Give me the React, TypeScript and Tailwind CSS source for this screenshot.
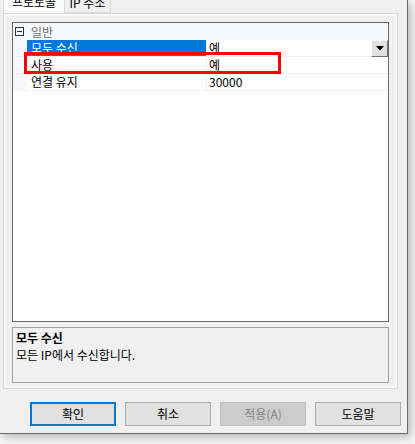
import React from 'react';

const font = { fontFamily: '"Noto Sans CJK KR", "Noto Sans", sans-serif' };

function Row({ label, value, selected, dropdown }: { label: string; value: string; selected?: boolean; dropdown?: boolean }) {
  return (
    <div className="flex h-[17px] border-b border-[#f0f0f0]">
      <div className="w-[14px] shrink-0 bg-[#f4f7fc]" />
      <div
        className={
          selected
            ? 'w-[179px] shrink-0 pl-[4px] text-[12px] leading-[16px] bg-[#0078d7] text-white'
            : 'w-[179px] shrink-0 pl-[4px] text-[12px] leading-[16px] text-black'
        }
      >
        {label}
      </div>
      <div className="w-px shrink-0 bg-[#f0f0f0]" />
      <div className="flex-1 flex items-start pl-[2px] text-[12px] leading-[16px] text-black">
        <span className="flex-1">{value}</span>
        {dropdown && (
          <div className="w-[17px] h-[17px] bg-[#e1e1e1] border border-t-white border-l-white border-r-[#707070] border-b-[#707070] flex items-center justify-center">
            <svg width="8" height="5" viewBox="0 0 8 5">
              <path d="M0 0 H8 L4 4.5 Z" fill="#000" />
            </svg>
          </div>
        )}
      </div>
    </div>
  );
}

export default function App() {
  return (
    <div className="w-[415px] h-[444px] bg-[#f5f5f5] overflow-hidden" style={font}>
      <div className="w-[408px] h-[434px] bg-[#f0f0f0] border-r border-b border-[#6b6b6b] shadow-[3px_3px_8px_rgba(0,0,0,0.25)] pl-[3px] flex flex-col">
        <div className="flex h-[13px] items-end overflow-hidden">
          <div className="w-[62px] h-[20px] -mb-px bg-[#f9f9f9] border-l border-r border-[#d9d9d9] flex items-start justify-center text-[12px] leading-[12px] text-black relative z-10">
            <span className="mt-[2px]">프로토콜</span>
          </div>
          <div className="w-[46px] h-[20px] bg-[#f0f0f0] border-r border-[#d9d9d9] border-b flex items-start justify-center text-[12px] leading-[12px] text-black">
            <span className="mt-[4px]">IP 주소</span>
          </div>
        </div>

        {/* tab page */}
        <div className="w-[395px] h-[376px] border border-[#d9d9d9] bg-[#f9f9f9] p-[2px]">
          <div className="w-full h-full bg-[#f0f0f0] px-[6px] pt-[6px] flex flex-col">
            {/* property grid */}
            <div className="relative h-[300px] border border-[#696969] bg-white flex flex-col">
              <div className="flex h-[17px] bg-[#f4f7fc] items-center">
                <div className="ml-[2px] w-[9px] h-[9px] border border-[#333] flex items-center justify-center">
                  <div className="w-[5px] h-px bg-[#333]" />
                </div>
                <span className="ml-[7px] text-[12px] leading-[16px] text-[#6d6d6d]">일반</span>
              </div>
              <Row label="모두 수신" value="예" selected dropdown />
              <Row label="사용" value="예" />
              <Row label="연결 유지" value="30000" />
              <div className="absolute left-[11px] top-[29px] w-[257px] h-[22px] border-[3px] border-[#ff0000]" />
            </div>

            {/* description */}
            <div className="mt-[5px] h-[56px] border border-[#a0a0a0] bg-[#f0f0f0] px-[3px] pt-[1px]">
              <div className="text-[12px] leading-[17px] font-bold text-black">모두 수신</div>
              <div className="text-[12px] leading-[17px] text-black">모든 IP에서 수신합니다.</div>
            </div>
          </div>
        </div>

        {/* buttons */}
        <div className="flex mt-[13px] pl-[27px] gap-[9px] text-[12px]">
          <button className="w-[86px] h-[24px] bg-[#e1e1e1] border-2 border-[#0078d7] text-black">확인</button>
          <button className="w-[86px] h-[24px] bg-[#e1e1e1] border border-[#adadad] text-black">취소</button>
          <button className="w-[86px] h-[24px] bg-[#cccccc] border border-[#bfbfbf] text-[#838383]">적용(A)</button>
          <button className="w-[86px] h-[24px] bg-[#e1e1e1] border border-[#adadad] text-black">도움말</button>
        </div>
      </div>
    </div>
  );
}
